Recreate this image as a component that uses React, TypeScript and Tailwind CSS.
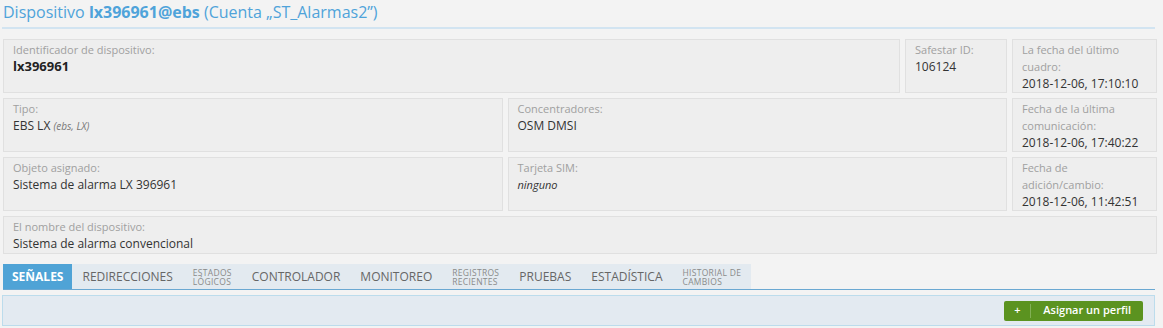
import React from "react";

const F = { fontFamily: "'Open Sans', 'Liberation Sans', sans-serif" };

function Card({ label, children, className = "" }: { label: React.ReactNode; children?: React.ReactNode; className?: string }) {
  return (
    <div className={"bg-[#eeeeee] border border-[#e0e0e0] px-[9px] pt-[1px] " + className}>
      <div className="text-[11px] leading-[17px] text-[#a0a0a0]">{label}</div>
      <div className="text-[12px] leading-[17px] text-[#333]">{children}</div>
    </div>
  );
}

export default function App() {
  const tabs: { t: React.ReactNode; small?: boolean }[] = [
    { t: "REDIRECCIONES" },
    { t: <>ESTADOS<br />LÓGICOS</>, small: true },
    { t: "CONTROLADOR" },
    { t: "MONITOREO" },
    { t: <>REGISTROS<br />RECIENTES</>, small: true },
    { t: "PRUEBAS" },
    { t: "ESTADÍSTICA" },
    { t: <>HISTORIAL DE<br />CAMBIOS</>, small: true },
  ];
  return (
    <div style={F} className="w-[1163px] h-[328px] bg-[#f3f3f3] overflow-hidden">
      <div className="pl-[2px] pr-[8px]">
        <div className="h-[29px] pl-[1px] pt-[1px] text-[16px] leading-[22px] text-[#4fa3da] border-b-2 border-[#d2e4f1] whitespace-nowrap">
          Dispositivo <b className="font-bold">lx396961@ebs</b> (Cuenta „ST_Alarmas2”)
        </div>
      </div>
      <div className="pl-[3px] pr-[6px] pt-[10px] flex flex-col gap-[5px]">
        <div className="flex gap-[5px] h-[54px]">
          <Card className="flex-1" label="Identificador de dispositivo:">
            <span className="text-[13px] font-bold text-[#222]">lx396961</span>
          </Card>
          <Card className="w-[102px]" label="Safestar ID:">106124</Card>
          <Card className="w-[145px]" label={<>La fecha del último<br />cuadro:</>}>2018-12-06, 17:10:10</Card>
        </div>
        <div className="flex gap-[5px] h-[54px]">
          <Card className="flex-1" label="Tipo:">
            EBS LX <i className="text-[10px] text-[#777]">(ebs, LX)</i>
          </Card>
          <Card className="flex-1" label="Concentradores:">OSM DMSI</Card>
          <Card className="w-[145px]" label={<>Fecha de la última<br />comunicación:</>}>2018-12-06, 17:40:22</Card>
        </div>
        <div className="flex gap-[5px] h-[54px]">
          <Card className="flex-1" label="Objeto asignado:">Sistema de alarma LX 396961</Card>
          <Card className="flex-1" label="Tarjeta SIM:"><i className="text-[11px]">ninguno</i></Card>
          <Card className="w-[145px]" label={<>Fecha de<br />adición/cambio:</>}>2018-12-06, 11:42:51</Card>
        </div>
        <div className="flex h-[38px]">
          <Card className="flex-1" label="El nombre del dispositivo:">Sistema de alarma convencional</Card>
        </div>
      </div>
      <div className="pl-[3px] pr-[8px] pt-[10px]">
        <div className="flex border-b border-[#6aa8d2] h-[26px]">
          <div className="flex bg-[#e3eaf0] h-[25px]">
            <div className="bg-[#4fa3d6] text-white font-bold text-[12px] leading-[25px] px-[9px]">SEÑALES</div>
            {tabs.map((x, i) =>
              x.small ? (
                <div key={i} className="px-[10px] text-[8.5px] leading-[9px] tracking-[0.3px] text-[#8a8a8a] flex items-center">
                  <span>{x.t}</span>
                </div>
              ) : (
                <div key={i} className="px-[10px] text-[12px] leading-[25px] text-[#666]">{x.t}</div>
              )
            )}
          </div>
        </div>
      </div>
      <div className="pl-[2px] pr-[8px] pt-[5px]">
        <div className="h-[31px] bg-[#e3eaf1] border border-[#bcdcec] flex items-center justify-end pr-[11px]">
          <div className="h-[20px] bg-[#5b9320] rounded-[2px] flex items-center text-white text-[11px] font-semibold">
            <span className="w-[26px] text-center">+</span>
            <span className="w-px h-[14px] bg-[#82b055]"></span>
            <span className="px-[12px]">Asignar un perfil</span>
          </div>
        </div>
      </div>
    </div>
  );
}
